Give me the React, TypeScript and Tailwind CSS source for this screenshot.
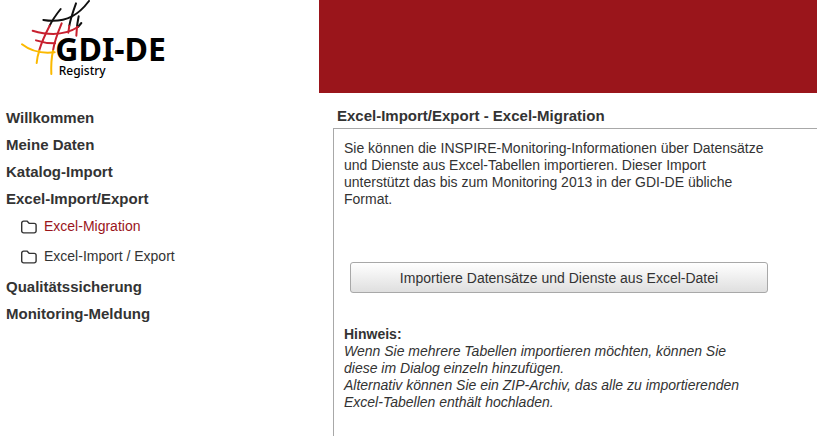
type SubItem = {
  label: string;
  active?: boolean;
};

type MenuItem = {
  label: string;
  children?: SubItem[];
};

const menu: MenuItem[] = [
  { label: 'Willkommen' },
  { label: 'Meine Daten' },
  { label: 'Katalog-Import' },
  {
    label: 'Excel-Import/Export',
    children: [
      { label: 'Excel-Migration', active: true },
      { label: 'Excel-Import / Export' },
    ],
  },
  { label: 'Qualitätssicherung' },
  { label: 'Monitoring-Meldung' },
];

function Logo() {
  return (
    <svg
      className="block h-[84px] w-[180px]"
      viewBox="0 0 540 252"
      fill="none"
      strokeWidth="6"
      strokeLinecap="round"
      role="img"
      aria-label="GDI-DE Registry"
    >
      {/* black threads */}
      <g stroke="#111111">
        <path d="M130 60 C165 66 195 60 216 49 C238 38 254 20 267 3" />
        <path d="M182 27 C170 42 158 58 149 77" />
        <path d="M228 10 C220 32 212 54 208 77" />
        <path d="M236 49 C234 60 232 70 231 80" />
        <path d="M244 69 L234 81" />
      </g>
      {/* red threads */}
      <g stroke="#c8202f">
        <path d="M149 77 C136 102 125 126 118 150" />
        <path d="M185 70 C174 96 163 124 159 152" />
        <path d="M208 77 L205 98" />
        <path d="M231 80 L229 107" />
        <path d="M98 92 C146 106 195 106 234 81" />
        <path d="M108 121 C126 127 146 130 165 130" />
      </g>
      {/* gold threads */}
      <g stroke="#fbb900">
        <path d="M118 152 C114 163 111 176 110 189" />
        <path d="M159 152 C154 175 153 199 154 222" />
        <path d="M66 133 C94 155 130 161 164 157" />
      </g>
      <g fill="#000000" fontFamily="'Noto Sans', sans-serif">
        <text x="166" y="183" fontSize="96" fontWeight="700">
          GDI-DE
        </text>
        <text x="176" y="226" fontSize="36" fontWeight="500">
          Registry
        </text>
      </g>
    </svg>
  );
}

function FolderIcon() {
  return (
    <svg className="h-4 w-4" viewBox="0 0 16 16" fill="none" stroke="#333333" strokeWidth="1.4">
      <path
        d="M2.6 2.1 H6 L8.3 4.4 H13.2 A1.9 1.9 0 0 1 15.1 6.3 V12 A1.9 1.9 0 0 1 13.2 13.9 H2.6 A1.9 1.9 0 0 1 0.7 12 V4 A1.9 1.9 0 0 1 2.6 2.1 Z"
        strokeLinejoin="round"
      />
    </svg>
  );
}

export default function App() {
  return (
    <div className="min-h-screen flex flex-col bg-white font-['Liberation_Sans',Arial,sans-serif] text-sm text-[#333333]">
      <header className="flex">
        <a href="#" className="block h-[93px] w-[319px] shrink-0">
          <Logo />
        </a>
        <div className="flex-1 bg-[#9a151b]" />
      </header>

      <div className="flex flex-1">
        <nav className="w-[333px] shrink-0 pl-1.5 pt-[11px]">
          <ul>
            {menu.map((item) => (
              <li key={item.label}>
                <a href="#" className="block text-[15px] font-bold leading-[27px]">
                  {item.label}
                </a>
                {item.children && (
                  <ul className="flex flex-col gap-[3px] pl-[15px] pt-px pb-[3px]">
                    {item.children.map((child) => (
                      <li key={child.label}>
                        <a
                          href="#"
                          className={`flex items-center gap-[7px] leading-[27px] ${
                            child.active ? 'text-[#9a151b]' : ''
                          }`}
                        >
                          <FolderIcon />
                          {child.label}
                        </a>
                      </li>
                    ))}
                  </ul>
                )}
              </li>
            ))}
          </ul>
        </nav>

        <main className="flex flex-1 flex-col pt-[13px]">
          <h1 className="pl-1 pb-[3px] text-[15px] font-bold leading-[19px]">
            Excel-Import/Export - Excel-Migration
          </h1>
          <section className="flex-1 border-l border-t border-[#a8a8a8] pl-2.5 pt-[11px] leading-[17px]">
            <div className="max-w-[426px]">
              <p>
                Sie können die INSPIRE-Monitoring-Informationen über Datensätze und Dienste aus
                Excel-Tabellen importieren. Dieser Import unterstützt das bis zum Monitoring 2013 in
                der GDI-DE übliche Format.
              </p>
              <div className="pl-1.5 pr-0.5 pt-[54px] pb-[33px]">
                <button
                  type="button"
                  className="h-[31px] w-full rounded-[3px] border border-[#a8a8a8] bg-linear-to-b from-white to-[#dfdfdf] pt-0.5"
                >
                  Importiere Datensätze und Dienste aus Excel-Datei
                </button>
              </div>
              <h2 className="font-bold">Hinweis:</h2>
              <div className="pr-4 italic">
                <p>
                  Wenn Sie mehrere Tabellen importieren möchten, können Sie diese im Dialog einzeln
                  hinzufügen.
                </p>
                <p>
                  Alternativ können Sie ein ZIP-Archiv, das alle zu importierenden Excel-Tabellen
                  enthält hochladen.
                </p>
              </div>
            </div>
          </section>
        </main>
      </div>
    </div>
  );
}
